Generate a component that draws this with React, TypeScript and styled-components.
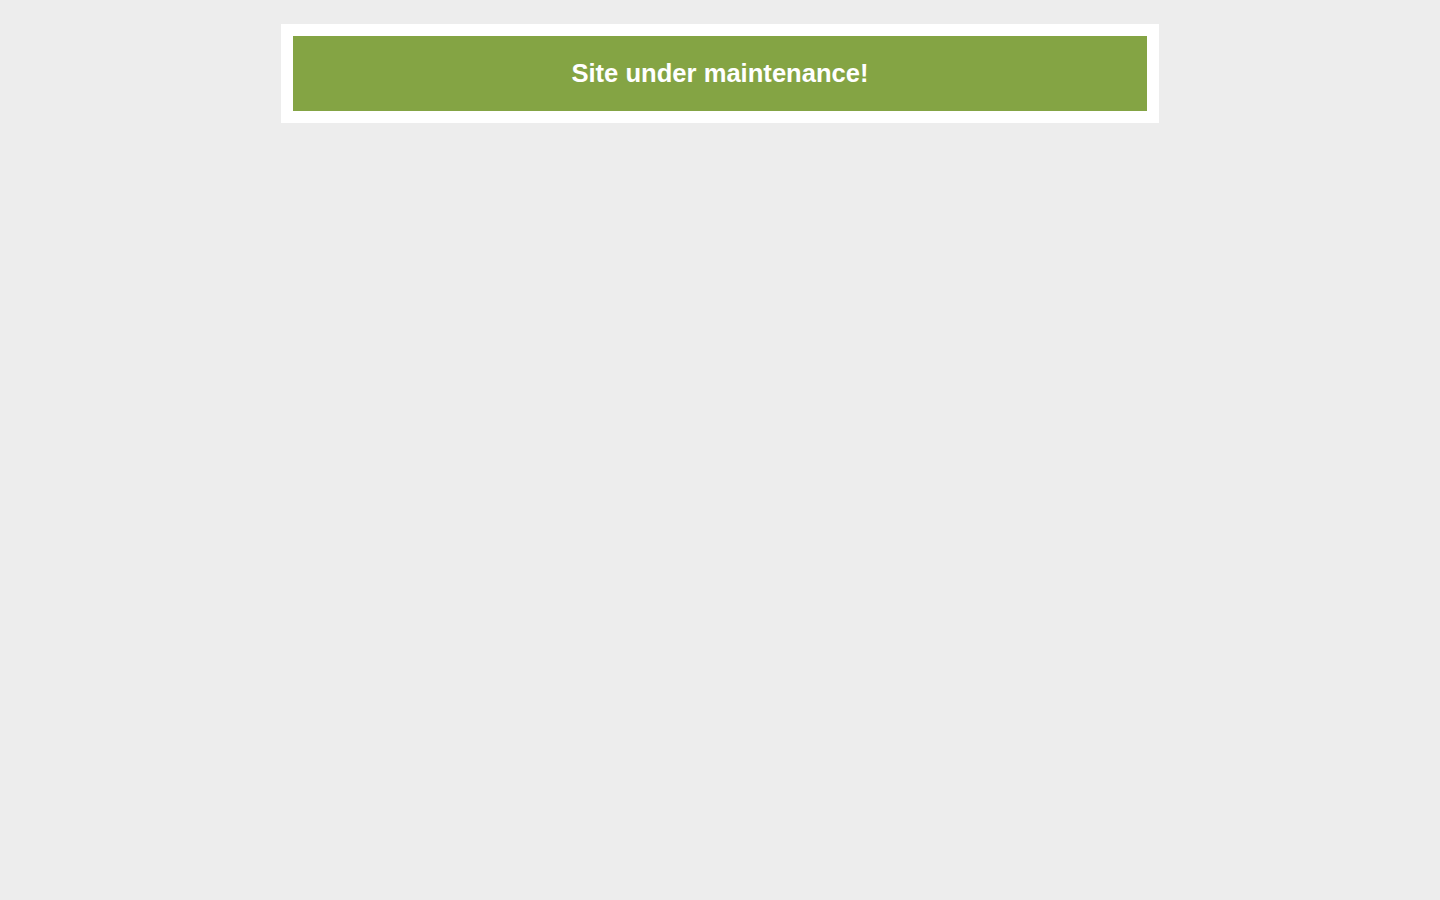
import React from "react";
import styled, { createGlobalStyle } from "styled-components";

const GlobalStyle = createGlobalStyle`
  html, body {
    margin: 0;
    padding: 0;
    background: #ededed;
    font-family: "Liberation Sans", Arial, sans-serif;
  }
`;

const Page = styled.div`
  display: flex;
  justify-content: center;
  padding-top: 24px;
  min-height: 900px;
  box-sizing: border-box;
`;

const Card = styled.div`
  width: 878px;
  box-sizing: border-box;
  background: #ffffff;
  padding: 12px;
  align-self: flex-start;
`;

const Banner = styled.div`
  background: #84a444;
  height: 75px;
  box-sizing: border-box;
  display: flex;
  align-items: center;
  justify-content: center;
`;

const Title = styled.h1`
  margin: 0;
  color: #ffffff;
  font-size: 25.6px;
  font-weight: bold;
  line-height: 1;
`;

export default function App() {
  return (
    <>
      <GlobalStyle />
      <Page>
        <Card>
          <Banner>
            <Title>Site under maintenance!</Title>
          </Banner>
        </Card>
      </Page>
    </>
  );
}
